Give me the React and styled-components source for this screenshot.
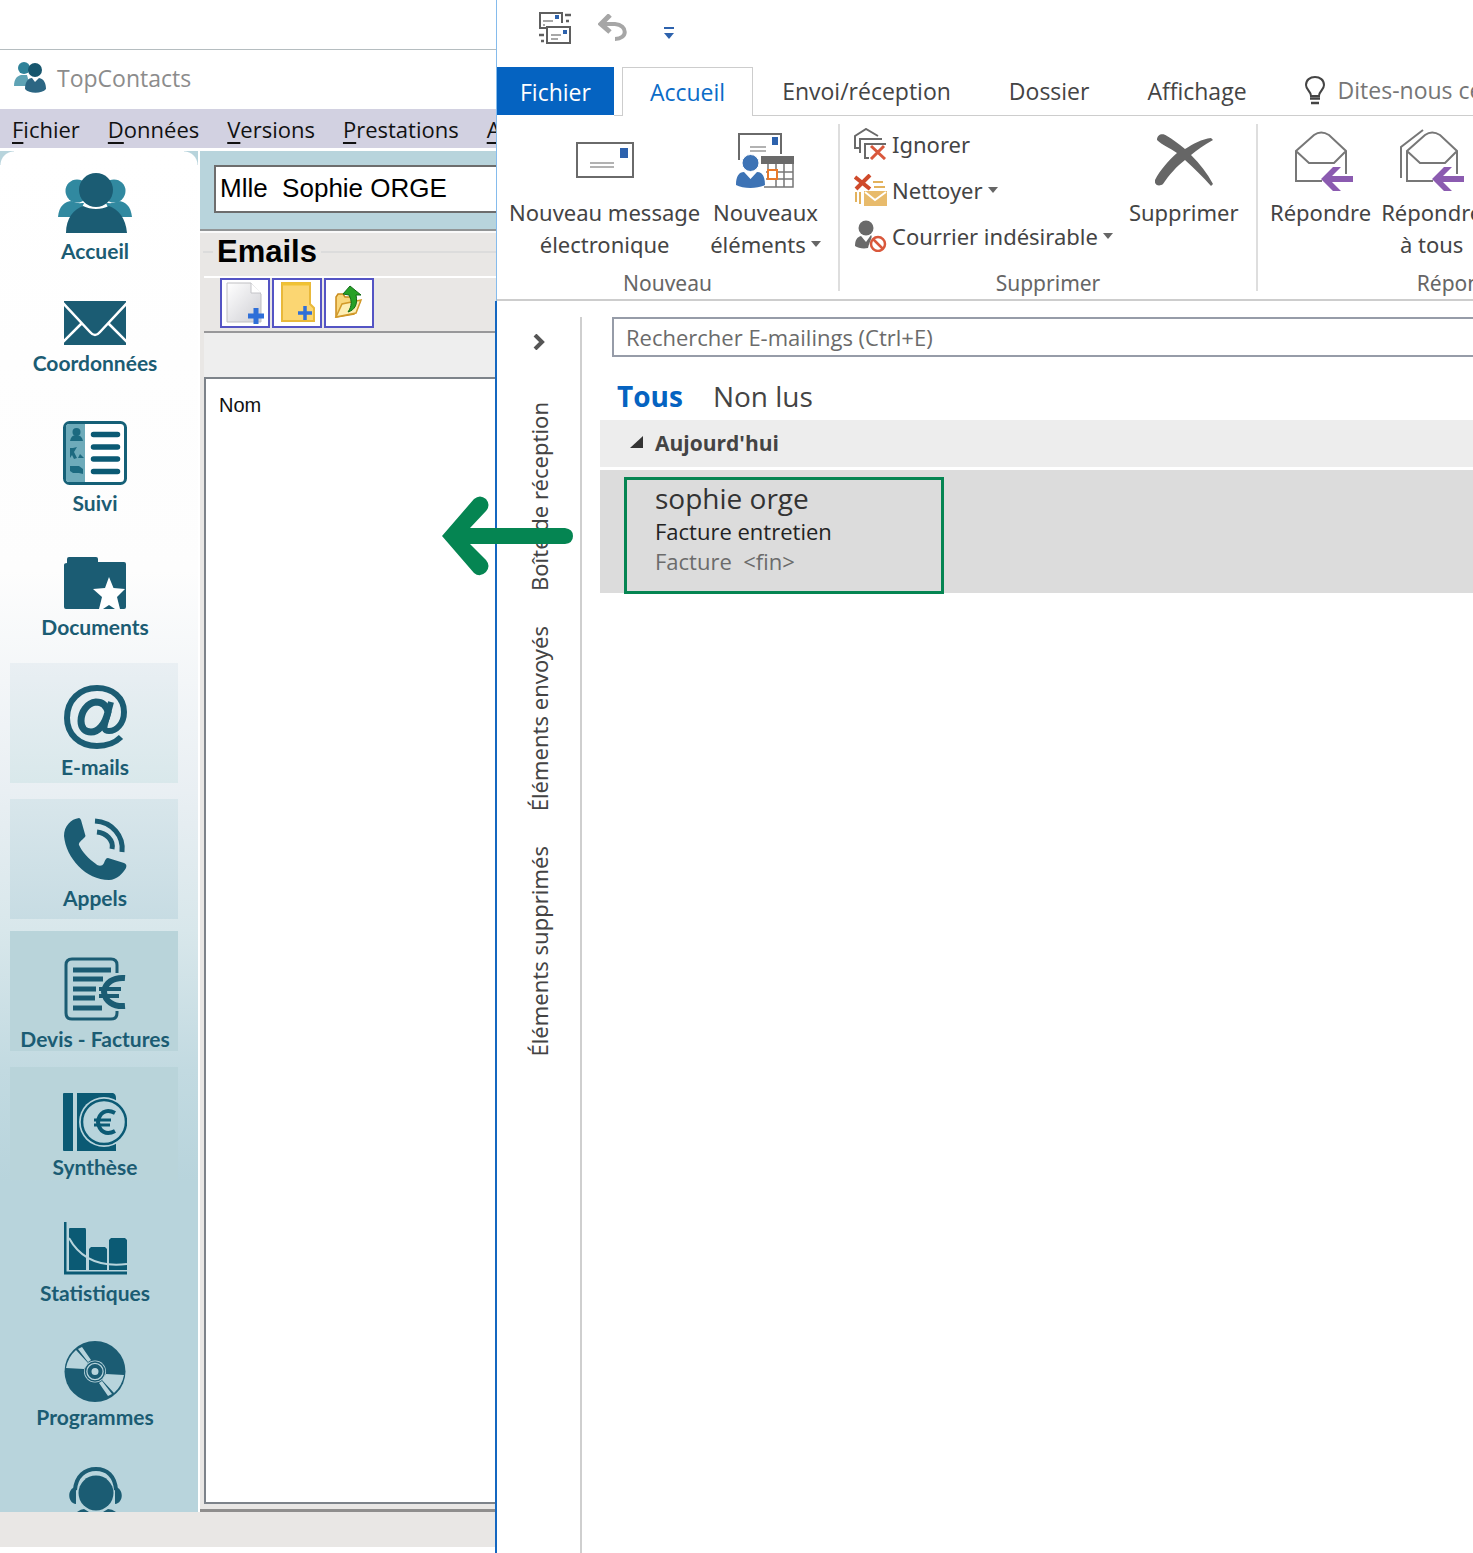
import React from "react";
import styled, { createGlobalStyle, css } from "styled-components";

const TEAL = "#1b5c73";
const TEAL_LIGHT = "#3189a0";
const PALE = "#b8d4dc";
const UI = '"Open Sans", "Noto Sans", sans-serif';
const RIBBON = '"Noto Sans", "Open Sans", sans-serif';
const ARIAL = '"Liberation Sans", Arial, sans-serif';

const GlobalStyle = createGlobalStyle`
  *, *::before, *::after { box-sizing: border-box; }
  body { margin: 0; background: #fff; font-family: ${UI}; color: #444; }
  button { font: inherit; color: inherit; background: none; border: 0; padding: 0; margin: 0; }
  svg { display: block; flex: none; }
`;

const Desktop = styled.div`
  display: flex;
  min-height: 100vh;
  overflow: hidden;
`;

/* ---------- TopContacts window ---------- */

const ContactsWindow = styled.section`
  flex: 0 0 496px;
  display: flex;
  flex-direction: column;
  min-width: 0;
  overflow: hidden;
  padding: 49px 0 6px;
`;

const TitleBar = styled.header`
  display: flex;
  align-items: center;
  gap: 10px;
  height: 60px;
  padding: 0 14px 4px;
  border-top: 1px solid #b5bdc0;
  color: #8c8c8c;
  font-size: 23px;
`;

const TitleText = styled.h1`
  margin: 0;
  font: inherit;
`;

const MenuBar = styled.nav`
  display: flex;
  gap: 28px;
  height: 39px;
  padding: 0 12px;
  background: #d2d1e1;
  color: #111;
  font-size: 22px;
  white-space: nowrap;
`;

const MenuItem = styled.button`
  line-height: 38px;
  &::first-letter { text-decoration: underline; text-underline-offset: 4px; }
`;

const ContactsBody = styled.div`
  flex: 1;
  display: flex;
  gap: 2px;
  padding-top: 3px;
`;

const SideNav = styled.nav`
  flex: 0 0 198px;
  display: flex;
  flex-direction: column;
  background:
    radial-gradient(circle at 100% 100%, transparent 13px, ${PALE} 14px) 0 0 / 14px 14px no-repeat,
    radial-gradient(circle at 0 100%, transparent 13px, ${PALE} 14px) 100% 0 / 14px 14px no-repeat,
    linear-gradient(#fff 0, #fdfdfd 420px, #e9eff3 640px, #d8e7eb 780px, #c2dae1 920px, ${PALE} 1030px);
`;

const SideItem = styled.button`
  display: flex;
  flex-direction: column;
  align-items: center;
  justify-content: flex-end;
  gap: ${(p) => p.$gap ?? 6}px;
  width: 168px;
  height: ${(p) => p.$h}px;
  margin: ${(p) => p.$top || 0}px 0 0 10px;
  padding: 0 0 ${(p) => p.$bottom ?? 1}px 2px;
  background: ${(p) => p.$tint || "none"};
`;

const SideLabel = styled.span`
  color: ${TEAL};
  font: 700 21px/24px Lato, sans-serif;
  white-space: nowrap;
`;

const ContactsMain = styled.main`
  flex: 1;
  display: flex;
  flex-direction: column;
  min-width: 0;
  background: #e9e7e5;
  border-bottom: 3px solid #8f8e8d;
`;

const ContactBand = styled.div`
  height: 80px;
  padding: 14px 0 0 14px;
  background: ${PALE};
  border-bottom: 2px solid #929596;
`;

const ContactInput = styled.input`
  display: block;
  width: 100%;
  height: 48px;
  padding: 0 4px 2px;
  border: 2px solid #6d6d6d;
  border-right: 0;
  border-radius: 0;
  background: #fff;
  color: #000;
  font: 26px ${ARIAL};
`;

const SectionHead = styled.div`
  display: flex;
  align-items: center;
  gap: 4px;
  height: 45px;
  padding: 0 0 5px 3px;
  border-top: 2px solid #fafafa;
  &::before { content: ""; width: 10px; border-top: 2px solid #dcdcdc; }
  &::after { content: ""; flex: 1; border-top: 2px solid #dcdcdc; }
`;

const SectionTitle = styled.h2`
  margin: 0;
  color: #000;
  font: 700 31px/38px ${ARIAL};
`;

const Frame = styled.div`
  flex: 1;
  display: flex;
  flex-direction: column;
  margin: 0 0 5px 4px;
`;

const ToolRow = styled.div`
  display: flex;
  gap: 2px;
  height: 57px;
  padding: 0 0 0 16px;
  border-top: 2px solid #fff;
  border-bottom: 2px solid #98989a;
`;

const ToolButton = styled.button`
  display: grid;
  place-items: center;
  width: 50px;
  height: 50px;
  border: 2px solid #5454c4;
  background: #fff;
`;

const BlankRow = styled.div`
  height: 44px;
  background: #eee;
`;

const ListBox = styled.div`
  flex: 1;
  padding: 12px 13px;
  border: 2px solid #7d838a;
  border-right: 0;
  background: #fff;
`;

const ListTable = styled.table`
  border-collapse: collapse;
  width: 100%;
  color: #111;
  font: 20px/28px ${ARIAL};
  th { padding: 0; text-align: left; font-weight: 400; }
`;

const StatusBar = styled.footer`
  height: 35px;
  background: #e9e7e5;
`;

/* ---------- Outlook window ---------- */

const MailWindow = styled.section`
  position: relative;
  flex: 1;
  display: flex;
  flex-direction: column;
  min-width: 0;
`;

const RibbonShell = styled.header`
  border-left: 1px solid #85bbec;
  overflow: hidden;
`;

const QuickBar = styled.div`
  display: flex;
  align-items: flex-start;
  height: 67px;
  padding: 11px 0 0 41px;
`;

const QuickButton = styled.button`
  display: flex;
  margin-right: ${(p) => p.$gap || 0}px;
  padding-top: ${(p) => p.$drop || 0}px;
`;

const TabRow = styled.div`
  display: flex;
  height: 49px;
  font-size: 23px;
  white-space: nowrap;
`;

const Tab = styled.button`
  flex: none;
  height: 49px;
  padding: 0 29px;
  line-height: 46px;
  border-bottom: 1px solid #cdcdcd;
  ${(p) => p.$kind === "file" && css`
    padding: 0 23px;
    background: #0563c1;
    border-bottom: 0;
    color: #fff;
    line-height: 50px;
    height: 48px;
  `}
  ${(p) => p.$kind === "active" && css`
    padding: 0 27px;
    border: 1px solid #cdcdcd;
    border-bottom: 0;
    color: #0a6cc8;
  `}
`;

const TabGap = styled.span`
  flex: none;
  width: 8px;
  border-bottom: 1px solid #cdcdcd;
`;

const TellMe = styled.button`
  flex: 1 0 auto;
  display: flex;
  align-items: center;
  gap: 13px;
  padding: 0 0 2px 29px;
  border-bottom: 1px solid #cdcdcd;
  color: #767676;
`;

const Ribbon = styled.div`
  display: flex;
  height: 185px;
  padding: 8px 0;
  border-bottom: 2px solid #cdcdcd;
  font-family: ${RIBBON};
  font-size: 22px;
  white-space: nowrap;
`;

const Group = styled.div`
  flex: none;
  display: flex;
  flex-direction: column;
  align-items: center;
  min-width: ${(p) => p.$min}px;
  border-right: 2px solid #dedede;
`;

const GroupRow = styled.div`
  flex: 1;
  align-self: stretch;
  display: flex;
  gap: ${(p) => p.$gap}px;
  padding-left: ${(p) => p.$left}px;
`;

const GroupLabel = styled.span`
  color: #666;
  font-size: 21px;
  line-height: 16px;
`;

const BigButton = styled.button`
  display: flex;
  flex-direction: column;
  align-items: center;
  line-height: 32px;
`;

const BigIcon = styled.span`
  display: flex;
  align-items: center;
  height: 72px;
`;

const SmallStack = styled.div`
  display: flex;
  flex-direction: column;
  gap: 6px;
`;

const SmallButton = styled.button`
  display: flex;
  align-items: center;
  gap: 5px;
  height: 40px;
`;

const WithArrow = styled.span`
  display: flex;
  align-items: center;
  gap: 5px;
`;

const MailBody = styled.div`
  flex: 1;
  display: flex;
  margin-left: -1px;
  padding-top: 16px;
  border-left: 2px solid #1467c0;
`;

const FolderStrip = styled.nav`
  flex: 0 0 85px;
  display: flex;
  flex-direction: column;
  align-items: center;
  gap: 35px;
  border-right: 2px solid #cfcfcf;
  color: #444;
`;

const Expand = styled.button`
  display: grid;
  place-items: center;
  height: 50px;
`;

const FolderLink = styled.a`
  writing-mode: vertical-rl;
  transform: rotate(180deg);
  color: inherit;
  text-decoration: none;
  font-family: ${RIBBON};
  font-size: 22px;
  line-height: 32px;
`;

const MessagePane = styled.main`
  flex: 1;
  min-width: 0;
  padding-left: 18px;
`;

const SearchInput = styled.input`
  display: block;
  width: calc(100% - 12px);
  height: 40px;
  margin-left: 12px;
  padding: 0 12px;
  border: 2px solid #969ca8;
  border-right: 0;
  border-radius: 0;
  font: 22px ${UI};
  &::placeholder { color: #6b6b6b; opacity: 1; }
`;

const Filters = styled.div`
  display: flex;
  align-items: center;
  gap: 30px;
  height: 63px;
  padding: 14px 0 0 17px;
`;

const Filter = styled.button`
  font-size: 28px;
  line-height: 40px;
  ${(p) => p.$on && css`
    color: #0563c1;
    font-weight: 700;
  `}
`;

const DayHeader = styled.h3`
  display: flex;
  align-items: center;
  gap: 12px;
  height: 47px;
  margin: 0 0 3px;
  padding: 0 0 2px 30px;
  background: #ededed;
  font-size: 21px;
  font-weight: 700;
`;

const MessageRow = styled.article`
  height: 123px;
  padding: 7px 24px 0;
  background: #dcdcdc;
`;

const Highlight = styled.div`
  width: 320px;
  height: 117px;
  padding: 0 28px;
  border: 3px solid #058552;
  white-space: pre;
`;

const Sender = styled.div`
  color: #333;
  font-size: 28px;
  line-height: 36px;
`;

const Line = styled.div`
  color: ${(p) => (p.$muted ? "#6b6b6b" : "#222")};
  font-size: 22px;
  line-height: 30px;
`;

const TransferArrow = styled.svg`
  position: absolute;
  left: -54px;
  top: 496px;
`;

/* ---------- Drawings ---------- */

const AppLogo = () => (
  <svg width="33" height="32" viewBox="0 0 33 32">
    <circle cx="10" cy="6" r="6" fill="#2f8299" />
    <path d="M0 24 C0 17 3 14 7 13 L13 13 L16 24 Z" fill="#5fa3b5" />
    <circle cx="21" cy="8" r="7" fill="#17566e" />
    <path d="M11 27 C11 19 15 16 18 16 L21 20 L25 16 C30 17 32 21 32 27 C28 32 15 32 11 27 Z" fill="#2c6683" />
  </svg>
);

const PeopleIcon = () => (
  <svg width="74" height="60" viewBox="0 0 74 60">
    <g fill={TEAL_LIGHT}>
      <circle cx="19" cy="18" r="11.500" />
      <circle cx="56" cy="18" r="11.500" />
      <path d="M0 44 C1 33 7 28 14 28 C19 31 23 30 26 30 L20 44 Z" />
      <path d="M74 44 C73 33 67 28 60 28 C55 31 51 30 48 30 L54 44 Z" />
    </g>
    <path d="M8 60 C8 45 16 36 25 33 C33 37 43 37 51 33 C60 36 68 45 69 60 Z" fill={TEAL} />
    <circle cx="38" cy="17" r="17" fill={TEAL} />
  </svg>
);

const MailIcon = () => (
  <svg width="62" height="44" viewBox="0 0 62 44">
    <rect width="62" height="44" fill={TEAL} />
    <path d="M-1 2 L26 31 Q31 37 36 31 L63 2 M-1 41 L17 23 M63 41 L45 23" fill="none" stroke="#fff" strokeWidth="2.500" />
  </svg>
);

const FollowIcon = () => (
  <svg width="64" height="64" viewBox="0 0 64 64">
    <rect x="1.500" y="1.500" width="61" height="61" rx="5" fill="#fff" stroke="#156077" strokeWidth="3" />
    <path d="M3 6 Q3 3 6 3 H22 V61 H6 Q3 61 3 58 Z" fill="#6eabba" />
    <g fill="#1c6a80">
      <circle cx="13.500" cy="11" r="4" />
      <path d="M7 20 Q8 14 13 14 Q19 14 20 20 Z" />
      <path d="M7 27 h3 l4 -1 -3 5 3 6 -3 1 -2 -4 -2 3 Z M15 37 l2 -4 4 4 Z" />
      <path d="M7 45 h9 l4 3 v5 l-4 -1 h-6 l-3 -2 Z" />
    </g>
    <path d="M30.500 13.500 H54.500 M30.500 26 H54.500 M30.500 38 H54.500 M30.500 50.500 H54.500" stroke="#0b5a74" strokeWidth="5.500" strokeLinecap="round" />
  </svg>
);

const FolderStarIcon = () => (
  <svg width="63" height="52" viewBox="0 0 63 52">
    <path d="M3 6 V2 Q3 0 5 0 H32 Q34 0 34 2 V5 H60 Q62 5 62 7 V50 Q62 52 60 52 H2 Q0 52 0 50 V8 Q0 6 3 6 Z" fill={TEAL} />
    <path d="M45 20 L49.500 31 L61 32 L53 40 L56 52 H51 L45 48 L39 52 H35 L38 40 L29 32 L41 31 Z" fill="#fff" />
  </svg>
);

const AtIcon = () => (
  <svg width="63" height="64" viewBox="0 0 63 64" fill="none" stroke={TEAL}>
    <path d="M57 52 C51 58 43 61 33 61 C15 61 3 49 3 33 C3 15 16 3 33 3 C49 3 60 13 60 27 C60 39 52 46 45 46 C40 46 40 43 41 39 L47 17" strokeWidth="6" />
    <path d="M44 27 C42 19 37 17 32 17 C23 18 17 27 17 36 C17 43 21 47 27 47 C34 47 41 40 44 27 Z" strokeWidth="7" />
  </svg>
);

const PhoneIcon = () => (
  <svg width="63" height="62" viewBox="0 0 63 62">
    <path d="M15 0 C7 1 0 8 0 18 C2 40 22 62 45 62 C53 62 59 55 62 50 C63 47 62 46 60 45 L44 40 C42 40 41 42 40 45 C38 49 34 48 32 46 C25 41 18 34 15 27 C14 24 20 21 21.500 18 L17 2 Q16 0 15 0 Z" fill={TEAL} />
    <path d="M31 3 C48 4 60 18 58 34 M33 14 C42 15 50 22 48 31" fill="none" stroke={TEAL} strokeWidth="5" />
  </svg>
);

const InvoiceIcon = () => (
  <svg width="62" height="64" viewBox="0 0 62 64" fill="none" stroke={TEAL}>
    <path d="M53 16 V8 Q53 2 47 2 H8 Q2 2 2 8 V56 Q2 62 8 62 H47 Q53 62 53 56 V54" strokeWidth="3" />
    <path d="M9 13 H47 M9 22 H39 M9 32 H32 M9 41 H31 M9 51 H38" strokeWidth="5" />
    <path d="M61 21 C49 20 41 26 40 35 C41 44 49 50 61 49" strokeWidth="6" />
    <path d="M35 32 H57 M35 39 H55" strokeWidth="4" />
  </svg>
);

const LedgerIcon = () => (
  <svg width="64" height="58" viewBox="0 0 64 58">
    <path d="M1 0 H10 V58 H1 Q0 58 0 57 V1 Q0 0 1 0 Z M14 0 H50 Q53 1 53 5 V58 H14 Z" fill="#0b5a74" />
    <circle cx="41" cy="29" r="25" fill={PALE} />
    <circle cx="41" cy="29" r="22" fill="none" stroke="#0b5a74" strokeWidth="2.500" />
    <path d="M52 20 C43 15 36 20 35 29 C36 38 43 43 52 38" fill="none" stroke="#0b5a74" strokeWidth="4" />
    <path d="M31 27 H48 M31 32 H47" stroke="#0b5a74" strokeWidth="3" />
  </svg>
);

const StatsIcon = () => (
  <svg width="63" height="53" viewBox="0 0 63 53">
    <path d="M1 0 V51 H63" fill="none" stroke="#0b5a74" strokeWidth="3" />
    <path d="M5 7 Q5 6 6 6 H21 Q22 6 22 8 V48 H5 Z M25 27 L27 25 H41 L43 27 V48 H25 Z M45 18 L47 16 H61 L63 18 V48 H45 Z" fill="#0b5a74" />
    <path d="M5 16 C17 38 38 45 63 42" fill="none" stroke={PALE} strokeWidth="2" />
  </svg>
);

const DiscIcon = () => (
  <svg width="62" height="61" viewBox="0 0 62 61">
    <circle cx="31" cy="30.500" r="30.500" fill={TEAL} />
    <g fill={PALE}>
      <path d="M2 27 Q4 16 12 9 L24 22 L20 28 Z M14 8 L18 6 L27 19 L24 21 Z" />
      <path d="M2 27 Q4 16 12 9 L24 22 L20 28 Z M14 8 L18 6 L27 19 L24 21 Z" transform="rotate(180 31 30.500)" />
      <circle cx="31" cy="30.500" r="11" />
    </g>
    <circle cx="31" cy="30.500" r="9.500" fill="none" stroke={TEAL} strokeWidth="1.500" />
    <circle cx="31" cy="30.500" r="5.500" fill="none" stroke={TEAL} strokeWidth="4" />
  </svg>
);

const HeadsetIcon = () => (
  <svg width="53" height="45" viewBox="0 0 53 45">
    <circle cx="27" cy="26" r="17.500" fill={TEAL} />
    <path d="M6 23 C7 9 16 2 27 2 C38 2 46 9 47 23" fill="none" stroke={TEAL} strokeWidth="4" />
    <path d="M7 20 C-2 21 -2 36 7 37 Z M46 20 C55 21 55 36 46 37 Z" fill={TEAL} />
    <path d="M8 45 Q12 42 15 42 L20 45 Z M34 45 L39 42 Q43 42 47 45 Z" fill={TEAL} />
  </svg>
);

const PlusMark = ({ x, y }) => (
  <path d={`M${x - 8} ${y} h16 M${x} ${y - 8} v16`} stroke="#2f6fd8" strokeWidth="5" fill="none" />
);

const NewPageIcon = () => (
  <svg width="46" height="46" viewBox="0 0 46 46">
    <defs>
      <linearGradient id="page" x1="0" y1="0" x2="1" y2="1">
        <stop offset="0" stopColor="#fff" />
        <stop offset="1" stopColor="#cfcfd4" />
      </linearGradient>
    </defs>
    <path d="M5 3 H29 L39 14 V42 H5 Z" fill="url(#page)" stroke="#bfbfc2" />
    <path d="M29 3 V13 H39" fill="#fff" stroke="#c4c4c8" />
    <PlusMark x={34} y={36} />
  </svg>
);

const NewNoteIcon = () => (
  <svg width="46" height="46" viewBox="0 0 46 46">
    <path d="M8 3 H36 V24 L40 28 V41 H8 Z" fill="#fbd672" stroke="#e9b93a" strokeWidth="2" />
    <path d="M8 4 H36" stroke="#f0c233" strokeWidth="3" />
    <path d="M24 33 h14 M31 26 v14" stroke="#2f6fd8" strokeWidth="3.500" />
  </svg>
);

const OpenFolderIcon = () => (
  <svg width="46" height="46" viewBox="0 0 46 46">
    <path d="M10 37 V17 L12 14 H17 L19 17 H29 V22 H34 L28 34 Z" fill="#f9d77c" stroke="#c98b1c" strokeWidth="1.500" />
    <path d="M10 37 L16 24 L35 20 L30 33 Z" fill="#fdeeb4" stroke="#d29a2a" strokeWidth="1.500" />
    <path d="M17 14 L24 6 L35 15 L30 15 C32 24 29 30 22 32 C26 26 26 21 23 15 Z" fill="#27a127" stroke="#136b18" />
  </svg>
);

const SendReceiveIcon = () => (
  <svg width="34" height="34" viewBox="0 0 34 34" fill="none" stroke="#5f5f5f" strokeWidth="2">
    <path d="M8 17 H2 V2 H24 V12" />
    <rect x="9" y="16" width="23" height="16" />
    <path d="M27 4 H33 M28 10 H31 M1 24 H6 M3 30 H6" strokeWidth="2.500" />
    <path d="M5 10 H15 M5 14 H7 M13 24 H23 M13 28 H20" strokeWidth="1.500" stroke="#8a8a8a" />
    <rect x="17" y="4" width="4" height="4" fill="#2d62ad" stroke="none" />
    <rect x="25" y="19" width="4" height="4" fill="#2d62ad" stroke="none" />
  </svg>
);

const UndoIcon = () => (
  <svg width="30" height="28" viewBox="0 0 30 28" fill="none" stroke="#a6a6a6" strokeWidth="4">
    <path d="M3 10 H17 C30 11 30 25 17 25" />
    <path d="M12 1 L3 10 L12 18" strokeWidth="5" />
  </svg>
);

const CustomizeIcon = () => (
  <svg width="12" height="12" viewBox="0 0 12 12" fill="#2d62ad">
    <rect x="1" width="10" height="2" />
    <path d="M1 6 H11 L6 12 Z" />
  </svg>
);

const BulbIcon = () => (
  <svg width="20" height="29" viewBox="0 0 20 29" fill="none" stroke="#444" strokeWidth="2">
    <path d="M6 20 C6 15 1 14 1 9 C1 4 5 1 10 1 C15 1 19 4 19 9 C19 14 14 15 14 20 Z" />
    <path d="M5 22.500 H15 M6 27 H14" strokeWidth="2.500" />
  </svg>
);

const NewMessageIcon = () => (
  <svg width="58" height="36" viewBox="0 0 58 36">
    <rect x="1" y="1" width="56" height="34" fill="none" stroke="#6a6a6a" strokeWidth="2" />
    <rect x="44" y="6" width="8" height="10" fill="#2d62ad" />
    <path d="M14 21 H38 M14 25 H38" stroke="#999" strokeWidth="1.500" />
  </svg>
);

const NewItemsIcon = () => (
  <svg width="58" height="57" viewBox="0 0 58 57">
    <path d="M3 28 V2 H45 V22" fill="none" stroke="#6a6a6a" strokeWidth="2" />
    <rect x="36" y="5" width="6" height="8" fill="#2d62ad" />
    <path d="M14 15 H30 M14 19 H30" stroke="#999" strokeWidth="1.500" />
    <rect x="25" y="24" width="33" height="8" fill="#6a6a6a" />
    <path d="M57 32 V55 H28 M48 32 V55 M40 32 V55 M32 32 V38 M30 40 H57 M30 47 H57" fill="none" stroke="#777" strokeWidth="1.500" />
    <rect x="32" y="38" width="9" height="9" fill="#fff" stroke="#e8792b" strokeWidth="2" />
    <circle cx="14.500" cy="31" r="8.500" fill="#3d73b5" stroke="#fff" />
    <path d="M0 53 C0 44 3 40 8 40 L14.500 47 L21 40 C26 40 29 44 29 53 C22 57 7 57 0 53 Z" fill="#3d73b5" />
  </svg>
);

const IgnoreIcon = () => (
  <svg width="33" height="32" viewBox="0 0 33 32" fill="none">
    <path d="M5 20 H1 V8 L12 1 L24 8 M6 25 V11 H28 M15 30 H11 V16 H32" stroke="#6a6a6a" strokeWidth="2" />
    <path d="M17 18 L31 31 M30 18 L17 31" stroke="#d9583c" strokeWidth="3" />
  </svg>
);

const CleanIcon = () => (
  <svg width="33" height="32" viewBox="0 0 33 32" fill="none">
    <path d="M1 3 L16 15 M16 1 L2 15" stroke="#cf4a2b" strokeWidth="4" />
    <path d="M19 8 H29 M20 13 H31 M2 18 V28 M6 18 V30" stroke="#e3b25c" strokeWidth="2" />
    <rect x="10" y="17" width="23" height="15" fill="#e8bb6c" />
    <path d="M11 18 L21 26 L32 18" stroke="#fff" strokeWidth="2" />
  </svg>
);

const JunkIcon = () => (
  <svg width="33" height="32" viewBox="0 0 33 32" fill="none">
    <circle cx="12" cy="8" r="7.500" fill="#6a6a6a" />
    <path d="M1 26 C1 20 3 17 7 16 L12 22 L17 15 C19 17 16 20 14 28 C9 29 4 28 1 26 Z" fill="#6a6a6a" />
    <circle cx="24" cy="24" r="7" fill="#fff" stroke="#d9583c" strokeWidth="2.500" />
    <path d="M19 19 L29 29" stroke="#d9583c" strokeWidth="2.500" />
  </svg>
);

const DeleteIcon = () => (
  <svg width="58" height="54" viewBox="0 0 58 54">
    <path d="M2 7 C2 1 8 0 12 3 C17 6 24 11 30 16 C38 11 47 6 56 5 L58 7 C49 12 42 17 36 22 C45 31 52 40 58 51 L56 53 C48 44 39 35 30 27 C22 33 14 42 8 51 C4 54 -1 52 0 47 C5 37 14 27 22 20 C15 15 7 12 2 7 Z" fill="#666" />
  </svg>
);

const ReplyIcon = ({ all }) => (
  <svg width="64" height="62" viewBox="-6 1 64 62" fill="none" stroke="#777" strokeWidth="2">
    {all && <path d="M-5 50 V19 L17 2" />}
    <path d="M27 53 H1 V23 L19 7 Q26 2 34 7 L51 23 V46 M1 23 L14 35 H39 L51 23" />
    <path d="M26 51 L38 39 H46 L37 48 H58 V54 H37 L46 63 H38 Z" fill="#8b5bb0" stroke="none" />
  </svg>
);

const DropArrow = () => (
  <svg width="10" height="6" viewBox="0 0 10 6"><path d="M0 0 H10 L5 6 Z" fill="#666" /></svg>
);

const ChevronIcon = () => (
  <svg width="12" height="16" viewBox="0 0 12 16"><path d="M2 1 L9 8 L2 15" fill="none" stroke="#555" strokeWidth="4" /></svg>
);

const CollapseIcon = () => (
  <svg width="13" height="13" viewBox="0 0 13 13"><path d="M13 0 V12 H0 Z" fill="#333" /></svg>
);

/* ---------- Data ---------- */

const MENUS = ["Fichier", "Données", "Versions", "Prestations", "A"];

const SECTIONS = [
  { label: "Accueil", Icon: PeopleIcon, h: 113 },
  { label: "Coordonnées", Icon: MailIcon, h: 112 },
  { label: "Suivi", Icon: FollowIcon, h: 140 },
  { label: "Documents", Icon: FolderStarIcon, h: 124 },
  { label: "E-mails", Icon: AtIcon, h: 120, top: 23, bottom: 4, tint: "linear-gradient(#e9eff3, #d9e8eb)" },
  { label: "Appels", Icon: PhoneIcon, h: 120, top: 16, bottom: 9, tint: "linear-gradient(#d8e6eb, #c7dce3)" },
  { label: "Devis - Factures", Icon: InvoiceIcon, h: 120, top: 12, bottom: 0, tint: "#b9d4da" },
  { label: "Synthèse", Icon: LedgerIcon, h: 113, top: 16, gap: 4, tint: "#b9d4da" },
  { label: "Statistiques", Icon: StatsIcon, h: 126 },
  { label: "Programmes", Icon: DiscIcon, h: 124, gap: 3 },
];

const TABS = ["Envoi/réception", "Dossier", "Affichage"];
const FOLDERS = ["Boîte de réception", "Éléments envoyés", "Éléments supprimés"];

function Contacts() {
  return (
    <ContactsWindow>
      <TitleBar>
        <AppLogo />
        <TitleText>TopContacts</TitleText>
      </TitleBar>
      <MenuBar>
        {MENUS.map((m) => <MenuItem key={m}>{m}</MenuItem>)}
      </MenuBar>
      <ContactsBody>
        <SideNav>
          {SECTIONS.map(({ label, Icon, h, top, bottom, gap, tint }) => (
            <SideItem key={label} $h={h} $top={top} $bottom={bottom} $gap={gap} $tint={tint}>
              <Icon />
              <SideLabel>{label}</SideLabel>
            </SideItem>
          ))}
          <SideItem $h={82} $bottom={0} aria-label="Assistance"><HeadsetIcon /></SideItem>
        </SideNav>
        <ContactsMain>
          <ContactBand>
            <ContactInput aria-label="Contact" defaultValue="Mlle  Sophie ORGE" />
          </ContactBand>
          <SectionHead><SectionTitle>Emails</SectionTitle></SectionHead>
          <Frame>
            <ToolRow>
              <ToolButton aria-label="Nouveau"><NewPageIcon /></ToolButton>
              <ToolButton aria-label="Ajouter"><NewNoteIcon /></ToolButton>
              <ToolButton aria-label="Ouvrir"><OpenFolderIcon /></ToolButton>
            </ToolRow>
            <BlankRow />
            <ListBox>
              <ListTable><thead><tr><th scope="col">Nom</th></tr></thead></ListTable>
            </ListBox>
          </Frame>
        </ContactsMain>
      </ContactsBody>
      <StatusBar />
    </ContactsWindow>
  );
}

function MailRibbon() {
  return (
    <RibbonShell>
      <QuickBar>
        <QuickButton $gap={26} aria-label="Envoyer/recevoir"><SendReceiveIcon /></QuickButton>
        <QuickButton $gap={35} $drop={3} aria-label="Annuler"><UndoIcon /></QuickButton>
        <QuickButton $drop={16} aria-label="Personnaliser"><CustomizeIcon /></QuickButton>
      </QuickBar>
      <TabRow>
        <Tab $kind="file">Fichier</Tab>
        <TabGap />
        <Tab $kind="active">Accueil</Tab>
        {TABS.map((t) => <Tab key={t}>{t}</Tab>)}
        <TellMe><BulbIcon />Dites-nous ce</TellMe>
      </TabRow>
      <Ribbon>
        <Group $min={343}>
          <GroupRow $left={12} $gap={10}>
            <BigButton>
              <BigIcon><NewMessageIcon /></BigIcon>
              <span>Nouveau message</span>
              <span>électronique</span>
            </BigButton>
            <BigButton>
              <BigIcon><NewItemsIcon /></BigIcon>
              <span>Nouveaux</span>
              <WithArrow>éléments<DropArrow /></WithArrow>
            </BigButton>
          </GroupRow>
          <GroupLabel>Nouveau</GroupLabel>
        </Group>
        <Group $min={418}>
          <GroupRow $left={14} $gap={16}>
            <SmallStack>
              <SmallButton><IgnoreIcon />Ignorer</SmallButton>
              <SmallButton><CleanIcon /><WithArrow>Nettoyer<DropArrow /></WithArrow></SmallButton>
              <SmallButton><JunkIcon /><WithArrow>Courrier indésirable<DropArrow /></WithArrow></SmallButton>
            </SmallStack>
            <BigButton>
              <BigIcon><DeleteIcon /></BigIcon>
              <span>Supprimer</span>
            </BigButton>
          </GroupRow>
          <GroupLabel>Supprimer</GroupLabel>
        </Group>
        <Group $min={416}>
          <GroupRow $left={12} $gap={10}>
            <BigButton>
              <BigIcon><ReplyIcon /></BigIcon>
              <span>Répondre</span>
            </BigButton>
            <BigButton>
              <BigIcon><ReplyIcon all /></BigIcon>
              <span>Répondre</span>
              <span>à tous</span>
            </BigButton>
          </GroupRow>
          <GroupLabel>Répondre</GroupLabel>
        </Group>
      </Ribbon>
    </RibbonShell>
  );
}

function Mail() {
  return (
    <MailWindow>
      <MailRibbon />
      <MailBody>
        <FolderStrip>
          <Expand aria-label="Développer"><ChevronIcon /></Expand>
          {FOLDERS.map((f) => <FolderLink key={f} href="#">{f}</FolderLink>)}
        </FolderStrip>
        <MessagePane>
          <SearchInput type="search" aria-label="Rechercher" placeholder="Rechercher E-mailings (Ctrl+E)" />
          <Filters>
            <Filter $on>Tous</Filter>
            <Filter>Non lus</Filter>
          </Filters>
          <DayHeader><CollapseIcon />Aujourd'hui</DayHeader>
          <MessageRow>
            <Highlight>
              <Sender>sophie orge</Sender>
              <Line>Facture entretien</Line>
              <Line $muted>{"Facture  <fin>"}</Line>
            </Highlight>
          </MessageRow>
        </MessagePane>
      </MailBody>
      <TransferArrow width="131" height="80" viewBox="0 0 131 80" aria-hidden="true">
        <path d="M0 40 L32 3 Q38 -2 44 3 Q49 9 44 15 L28 32 H123 Q131 33 131 40 Q131 47 123 48 H28 L44 64 Q49 70 44 76 Q38 82 32 77 Z" fill="#058552" />
      </TransferArrow>
    </MailWindow>
  );
}

export default function App() {
  return (
    <>
      <GlobalStyle />
      <Desktop>
        <Contacts />
        <Mail />
      </Desktop>
    </>
  );
}
